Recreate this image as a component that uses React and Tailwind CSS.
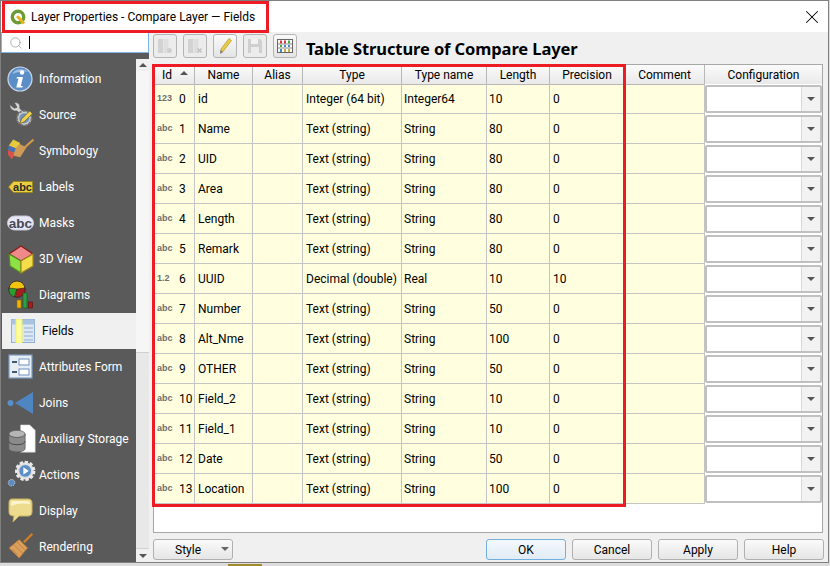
import { Search, X } from 'lucide-react';

const rows = [
  ['123', '0', 'id', 'Integer (64 bit)', 'Integer64', '10', '0'],
  ['abc', '1', 'Name', 'Text (string)', 'String', '80', '0'],
  ['abc', '2', 'UID', 'Text (string)', 'String', '80', '0'],
  ['abc', '3', 'Area', 'Text (string)', 'String', '80', '0'],
  ['abc', '4', 'Length', 'Text (string)', 'String', '80', '0'],
  ['abc', '5', 'Remark', 'Text (string)', 'String', '80', '0'],
  ['1.2', '6', 'UUID', 'Decimal (double)', 'Real', '10', '10'],
  ['abc', '7', 'Number', 'Text (string)', 'String', '50', '0'],
  ['abc', '8', 'Alt_Nme', 'Text (string)', 'String', '100', '0'],
  ['abc', '9', 'OTHER', 'Text (string)', 'String', '50', '0'],
  ['abc', '10', 'Field_2', 'Text (string)', 'String', '10', '0'],
  ['abc', '11', 'Field_1', 'Text (string)', 'String', '10', '0'],
  ['abc', '12', 'Date', 'Text (string)', 'String', '50', '0'],
  ['abc', '13', 'Location', 'Text (string)', 'String', '100', '0'],
];

const headers = ['Name', 'Alias', 'Type', 'Type name', 'Length', 'Precision', 'Comment', 'Configuration'];

const gridCols = 'grid grid-cols-[41px_58px_50px_99px_85px_63px_75px_80px_117px]';

// los iconos ocupan 26px de ancho dentro de una caja de 30
function Icono({ children, vb = '0 0 30 30' }) {
  return (
    <svg width="30" height="30" viewBox={vb} className="shrink-0">
      {children}
    </svg>
  );
}

const menu = [
  {
    label: 'Information',
    icon: (
      <Icono>
        <circle cx="13" cy="15" r="12" fill="#5b8ec6" stroke="#c9d9ec" strokeWidth="1.2" />
        <path d="M5 10a10 9 0 0 1 16-2c-6-1-11 0-16 2z" fill="#9fc0e4" />
        <circle cx="15" cy="8.5" r="2.2" fill="#fff" />
        <path d="M10 13h6l-2.2 9h2l-.5 1.6h-6l2.2-9h-2z" fill="#fff" />
      </Icono>
    ),
  },
  {
    label: 'Source',
    icon: (
      <Icono vb="0 0 33 33">
        <path d="M3 5l5 4 3-1-3-5c4-1 7 2 6 6l10 10-3 3L11 12C7 13 3 10 3 5z" fill="#d5d5d5" stroke="#555" strokeWidth=".8" />
        <circle cx="19" cy="20" r="8" fill="#c9c9c9" stroke="#777" strokeDasharray="3 1.5" strokeWidth="2" />
        <circle cx="19" cy="20" r="5.5" fill="#6f93bd" />
        <path d="M14 26l2-5 9-9 3 3-9 9z" fill="#f0d24d" stroke="#5a4a10" strokeWidth=".7" />
      </Icono>
    ),
  },
  {
    label: 'Symbology',
    icon: (
      <Icono vb="0 0 34 34">
        <path d="M20 13l10-9" stroke="#d49a45" strokeWidth="2.4" />
        <path d="M7 5l15 8-7 11-9-2z" fill="#cf9a55" />
        <path d="M7 4l8 4-5 6-8-3z" fill="#e7c93e" />
        <path d="M2 11l8 3-2 5-7-3z" fill="#4672b5" />
        <path d="M1 16l7 3-1 6-2 1-4-5z" fill="#d8524a" />
      </Icono>
    ),
  },
  {
    label: 'Labels',
    icon: (
      <Icono>
        <path d="M1.5 15l5-5.5h19v11h-19z" fill="#e9cf3f" stroke="#9a8514" strokeWidth=".8" />
        <text x="15.5" y="19" textAnchor="middle" fontFamily="Liberation Sans, sans-serif" fontWeight="700" fontSize="11" fill="#2a2a20">abc</text>
      </Icono>
    ),
  },
  {
    label: 'Masks',
    icon: (
      <Icono>
        <rect x=".5" y="8" width="26" height="14" rx="7" fill="#e8e8f4" stroke="#c6c6dc" />
        <text x="13.5" y="20" textAnchor="middle" fontFamily="Liberation Sans, sans-serif" fontWeight="700" fontSize="13.5" fill="#474756">abc</text>
      </Icono>
    ),
  },
  {
    label: '3D View',
    icon: (
      <Icono>
        <path d="M14 2l12 8-12 7L2 10z" fill="#f08a8a" stroke="#8b1a1a" strokeWidth="1.2" />
        <path d="M2 10l12 7v12L3 22z" fill="#8fe044" stroke="#4f8a1c" strokeWidth="1.2" />
        <path d="M26 10l-12 7v12l12-7z" fill="#f4dd4a" stroke="#a08a1c" strokeWidth="1.2" />
      </Icono>
    ),
  },
  {
    label: 'Diagrams',
    icon: (
      <Icono>
        <circle cx="10" cy="9" r="8" fill="#f1c40f" stroke="#222" strokeWidth=".8" />
        <path d="M10 9L2 8a8 8 0 0 0 5 9z" fill="#2ca02c" stroke="#222" strokeWidth=".6" />
        <path d="M10 9l8-1a8 8 0 0 1-10 9z" fill="#a51d1d" stroke="#222" strokeWidth=".6" />
        <rect x="10" y="20" width="4" height="8" fill="#f4b400" stroke="#8a6a00" strokeWidth=".6" />
        <rect x="16" y="13" width="4" height="15" fill="#2f9e44" stroke="#14591f" strokeWidth=".6" />
        <rect x="21.5" y="22" width="4" height="6" fill="#a51d1d" stroke="#5e0f0f" strokeWidth=".6" />
      </Icono>
    ),
  },
  {
    label: 'Fields',
    active: true,
    icon: (
      <svg width="24" height="24" viewBox="0 0 24 24" className="shrink-0">
        <rect x=".5" y=".5" width="23" height="23" fill="#dce7f3" stroke="#8fb0d2" />
        <rect x=".5" y=".5" width="23" height="5" fill="#a9c4e0" />
        <path d="M13 9h9M13 13h9M13 17h9M13 21h9" stroke="#8fb0d2" />
        <rect x="5" y="0" width="6" height="24" fill="#fdfd9a" stroke="#eeee66" />
      </svg>
    ),
  },
  {
    label: 'Attributes Form',
    icon: (
      <Icono>
        <rect x="2" y="3" width="23" height="23" fill="#e6edf5" stroke="#7d9cbf" strokeWidth="1.2" />
        <rect x="12" y="7" width="10" height="6" fill="#fff" stroke="#6f93bd" />
        <rect x="12" y="17" width="10" height="6" fill="#fff" stroke="#6f93bd" />
        <path d="M5 10h5M5 20h5" stroke="#44586e" strokeWidth="2" />
      </Icono>
    ),
  },
  {
    label: 'Joins',
    icon: (
      <Icono>
        <circle cx="3.5" cy="15" r="3" fill="#5b8ec6" />
        <path d="M26 4v22L8 15z" fill="#4f86c2" />
      </Icono>
    ),
  },
  {
    label: 'Auxiliary Storage',
    icon: (
      <Icono vb="0 0 33 33">
        <path d="M15 1h10l6 6v24H15z" fill="#fff" stroke="#ccc" strokeWidth=".6" />
        <ellipse cx="11" cy="11" rx="9" ry="4" fill="#b5b5b5" stroke="#555" strokeWidth=".7" />
        <path d="M2 11v16c0 5 18 5 18 0V11c0 5-18 5-18 0z" fill="#8a8a8a" stroke="#555" strokeWidth=".7" />
        <path d="M2 19c0 5 18 5 18 0" fill="none" stroke="#444" />
      </Icono>
    ),
  },
  {
    label: 'Actions',
    icon: (
      <Icono vb="0 0 33 33">
        <circle cx="20" cy="12" r="9.5" fill="#ddd" stroke="#e9e9e9" strokeDasharray="3.5 2" strokeWidth="3.5" />
        <circle cx="20" cy="12" r="7" fill="#5b8ec6" stroke="#e8e8e8" />
        <path d="M18 8v8l6-4z" fill="#fff" />
        <circle cx="5" cy="25" r="3.6" fill="#5b8ec6" stroke="#ccc" strokeDasharray="1.5 1" />
      </Icono>
    ),
  },
  {
    label: 'Display',
    icon: (
      <Icono>
        <path d="M5 3h16c3 0 4 2 4 4v9c0 3-2 4-4 4H12l-6 6 1-6C4 20 2 19 2 16V7c0-3 1-4 3-4z" fill="#eddc8d" stroke="#c8b45a" />
        <path d="M5 5h14c3 0 4 1 4 3-6-1-13-1-19 2 0-3 0-5 1-5z" fill="#fbf4cf" />
      </Icono>
    ),
  },
  {
    label: 'Rendering',
    icon: (
      <Icono vb="0 0 32 32">
        <path d="M18 11l9-9" stroke="#d07f20" strokeWidth="2.4" />
        <path d="M13 8l9 9-9 11L2 17z" fill="#dca05d" stroke="#a8692a" strokeWidth=".8" />
        <path d="M7 13l10 10M10 10l10 10M5 18l6 6" stroke="#b27a3c" strokeWidth=".8" />
      </Icono>
    ),
  },
];

function BotonBarra({ children, disabled }) {
  return (
    <div className={`w-[24px] h-[24px] rounded-[3px] border border-[#b4b4b4] flex items-center justify-center ${disabled ? 'bg-[#ececec]' : 'bg-gradient-to-b from-[#fafafa] to-[#e4e4e4]'}`}>
      {children}
    </div>
  );
}

function Boton({ label, primary }) {
  return (
    <button className={`h-[21px] w-[80px] rounded-[3px] border text-[12px] text-black flex items-center justify-center ${primary ? 'border-[#6fb0e0] bg-gradient-to-b from-[#f4f9fd] to-[#e2ecf5]' : 'border-[#b0b0b0] bg-gradient-to-b from-[#fafafa] to-[#e6e6e6]'}`}>
      {label}
    </button>
  );
}

export default function App() {
  return (
    <div className="relative w-[830px] h-[566px] bg-[#dcdcdc] overflow-hidden font-['Roboto',sans-serif] text-[12px] text-black">
      <div className="w-[829px] h-[563px] border border-[#7f7f7f] flex flex-col bg-[#f0f0f0]">
        {/* barra de titulo */}
        <div className="h-[31px] shrink-0 bg-white flex items-center pl-[9px] pr-[5px]">
          <svg width="16" height="16" viewBox="0 0 16 16">
            <circle cx="8" cy="8" r="5.7" fill="none" stroke="#6b9c34" strokeWidth="3.4" />
            <path d="M8.5 8.5l5.5 6" stroke="#e8b21f" strokeWidth="3" />
            <circle cx="8" cy="8" r="1.6" fill="#e8b21f" />
          </svg>
          <span className="ml-[5px] whitespace-nowrap">Layer Properties - Compare Layer — Fields</span>
          <X size={22} strokeWidth={1.1} className="ml-auto" />
        </div>

        <div className="flex-1 flex min-h-0">
          {/* menu lateral */}
          <div className="w-[148px] shrink-0 flex flex-col bg-[#5a5a5a]">
            <div className="h-[21px] shrink-0 bg-white border border-[#7eb4ea] flex items-center pl-[7px]">
              <Search size={14} strokeWidth={1.3} className="text-[#9a9a9a]" />
              <span className="ml-[6px] w-px h-[13px] bg-black" />
            </div>
            <div className="flex-1 flex min-h-0 pt-[6px]">
              <div className="flex-1 overflow-hidden pl-[1px] pt-[2px]">
                {menu.map((item) => (
                  <div
                    key={item.label}
                    className={`h-[36px] flex items-center whitespace-nowrap ${item.active ? 'bg-[#f0f0f0] text-black pl-[9px] gap-[7px]' : 'text-white pl-[5px] gap-[2px]'}`}
                  >
                    {item.icon}
                    <span>{item.label}</span>
                  </div>
                ))}
              </div>
              <div className="w-[13px] shrink-0 bg-[#e8e8e8] flex flex-col">
                <div className="h-[12px] bg-[#f0f0f0] flex items-center justify-center">
                  <span className="w-0 h-0 border-x-[4px] border-x-transparent border-b-[4px] border-b-[#555]" />
                </div>
                <div className="h-[282px] bg-[#f6f6f6] border-b border-[#d0d0d0]" />
                <div className="flex-1" />
                <div className="h-[14px] bg-[#f0f0f0] flex items-center justify-center border-t border-[#d0d0d0]">
                  <span className="w-0 h-0 border-x-[4px] border-x-transparent border-t-[4px] border-t-[#555]" />
                </div>
              </div>
            </div>
          </div>

          {/* contenido */}
          <div className="flex-1 min-w-0 pl-[4px] pr-[5px] flex flex-col">
            <div className="h-[32px] shrink-0 flex items-start pt-[2px] gap-[6px]">
              <BotonBarra disabled>
                <svg width="18" height="18" viewBox="0 0 18 18"><rect x="2" y="2" width="5" height="14" fill="#d2d2d2" /><rect x="7.5" y="2" width="5" height="14" fill="#dedede" /><circle cx="13.5" cy="13.5" r="2.5" fill="#cfcfcf" /></svg>
              </BotonBarra>
              <BotonBarra disabled>
                <svg width="18" height="18" viewBox="0 0 18 18"><rect x="2" y="2" width="5" height="14" fill="#d2d2d2" /><rect x="7.5" y="2" width="5" height="14" fill="#dedede" /><path d="M11.5 11.5l4 4M15.5 11.5l-4 4" stroke="#c0c0c0" strokeWidth="1.5" /></svg>
              </BotonBarra>
              <BotonBarra>
                <svg width="18" height="18" viewBox="0 0 18 18"><path d="M5 12L13 1.5l2.5 2L7.5 14l-3 1.5z" fill="#eccb3e" stroke="#a08a30" strokeWidth=".6" /><path d="M4 17l.5-4 3 2z" fill="#888" /></svg>
              </BotonBarra>
              <BotonBarra disabled>
                <svg width="18" height="18" viewBox="0 0 18 18"><path d="M2 2h12l2 2v12H2z" fill="#cfcfcf" /><rect x="5" y="2" width="7" height="5" fill="#f2f2f2" /><rect x="5" y="10" width="8" height="6" fill="#ececec" /></svg>
              </BotonBarra>
              <BotonBarra>
                <svg width="18" height="18" viewBox="0 0 18 18"><rect x="1.5" y="2.5" width="15" height="13" fill="#fff" stroke="#666" /><path d="M2 7h14M2 11h14" stroke="#888" /><path d="M5 3.5v3M9 3.5v3" stroke="#d34" strokeWidth="2" /><path d="M13 3.5v3M5 8v2" stroke="#4a4" strokeWidth="2" /><path d="M9 8v2M13 8v2M5 12v3" stroke="#48c" strokeWidth="2" /><path d="M9 12v3M13 12v3" stroke="#ca4" strokeWidth="2" /></svg>
              </BotonBarra>
              <h1 className="ml-[3px] mt-[3px] text-[16.5px] leading-[24px] font-bold whitespace-nowrap font-['Noto_Sans',sans-serif] tracking-[-0.1px]">Table Structure of Compare Layer</h1>
            </div>

            {/* tabla de campos */}
            <div className="h-[469px] shrink-0 border border-[#a8a8a8] bg-white overflow-hidden">
              <div className={`${gridCols} h-[19px] bg-gradient-to-b from-[#fbfbfb] to-[#e9e9e9]`}>
                <div className="relative border-r border-b border-[#b8b8b8] flex items-center pl-[8px] pt-[1px]">
                  Id
                  <span className="absolute right-[6px] top-[6px] w-0 h-0 border-x-[4px] border-x-transparent border-b-[4px] border-b-[#555]" />
                </div>
                {headers.map((h) => (
                  <div key={h} className="border-r border-b border-[#b8b8b8] flex items-center justify-center whitespace-nowrap pt-[1px] last:border-r-0">
                    {h}
                  </div>
                ))}
              </div>
              {rows.map(([tipo, id, nombre, t, tn, len, prec]) => (
                <div key={id} className={`${gridCols} h-[30px] bg-[#ffffe0]`}>
                  <div className="relative border-r border-b border-[#c4c4c4] flex items-center pl-[25px]">
                    <span className="absolute left-[3px] top-[9px] text-[9px] leading-[10px] font-bold text-[#6e6e6e] font-['Liberation_Sans',sans-serif]">{tipo}</span>
                    {id}
                  </div>
                  <div className="border-r border-b border-[#c4c4c4] flex items-center pl-[3px]">{nombre}</div>
                  <div className="border-r border-b border-[#c4c4c4]" />
                  <div className="border-r border-b border-[#c4c4c4] flex items-center pl-[3px] whitespace-nowrap">{t}</div>
                  <div className="border-r border-b border-[#c4c4c4] flex items-center pl-[2px]">{tn}</div>
                  <div className="border-r border-b border-[#c4c4c4] flex items-center pl-[2px]">{len}</div>
                  <div className="border-r border-b border-[#c4c4c4] flex items-center pl-[3px]">{prec}</div>
                  <div className="border-r border-b border-[#c4c4c4]" />
                  <div className="bg-white py-[1px]">
                    <div className="h-full border-2 border-[#c0c0c0] rounded-[2px] bg-white flex justify-end">
                      <div className="w-[19px] border-l border-[#d8d8d8] bg-[#f2f2f2] flex items-center justify-center">
                        <span className="w-0 h-0 border-x-[4px] border-x-transparent border-t-[4px] border-t-[#555]" />
                      </div>
                    </div>
                  </div>
                </div>
              ))}
            </div>

            {/* botones */}
            <div className="flex-1 flex items-start pt-[6px]">
              <div className="h-[21px] w-[80px] rounded-[3px] border border-[#b0b0b0] bg-gradient-to-b from-[#fafafa] to-[#e6e6e6] flex items-center pl-[21px] relative">
                Style
                <span className="absolute right-[3px] top-[7px] w-0 h-0 border-x-[4px] border-x-transparent border-t-[4px] border-t-[#666]" />
              </div>
              <div className="ml-auto -mr-[1px] flex gap-[6px]">
                <Boton label="OK" primary />
                <Boton label="Cancel" />
                <Boton label="Apply" />
                <Boton label="Help" />
              </div>
            </div>
          </div>
        </div>
      </div>

      {/* fondo asomando bajo la ventana */}
      <div className="absolute left-[228px] top-[564px] w-[34px] h-[2px] bg-[#a08a2c]" />

      {/* recuadros rojos */}
      <div className="absolute left-[2px] top-[1px] w-[267px] h-[32px] border-[3px] border-[#ed1c24] pointer-events-none" />
      <div className="absolute left-[152px] top-[64px] w-[474px] h-[443px] border-[3px] border-[#ed1c24] pointer-events-none" />
    </div>
  );
}
